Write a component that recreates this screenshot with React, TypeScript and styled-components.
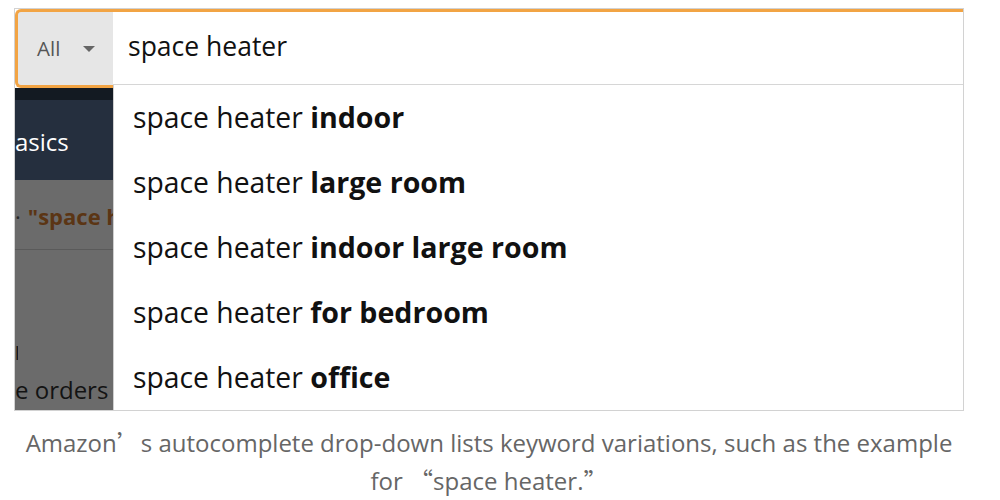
import styled, { createGlobalStyle } from "styled-components";

const GlobalStyle = createGlobalStyle`
  html, body {
    margin: 0;
    padding: 0;
    background: #ffffff;
  }
  body {
    width: 1000px;
    height: 500px;
    overflow: hidden;
  }
`;

const suggestions = [
  "indoor",
  "large room",
  "indoor large room",
  "for bedroom",
  "office",
];

const App = () => {
  return (
    <>
      <GlobalStyle />
      <Page>
        <Shot>
          <AllBox>
            All
            <Caret />
          </AllBox>
          <SearchInput>space heater</SearchInput>
          <Backdrop>
            <TopStrip />
            <NavBand>asics</NavBand>
            <ResultLine>
              <Dot>·</Dot>"space h
            </ResultLine>
            <DimmedRest>
              <Stub>l</Stub>
              <Orders>e orders</Orders>
            </DimmedRest>
          </Backdrop>
          <Dropdown>
            {suggestions.map((s) => (
              <Suggestion key={s}>
                space heater <b>{s}</b>
              </Suggestion>
            ))}
          </Dropdown>
        </Shot>
        <Caption>
          Amazon<Wide>’</Wide>s autocomplete drop-down lists keyword variations, such as the example
          <br />
          for <Wide>“</Wide>space heater.<Wide>”</Wide>
        </Caption>
      </Page>
    </>
  );
};

export default App;

const Page = styled.div`
  padding: 8px 0 0 14px;
`;

const Shot = styled.div`
  width: 948px;
  height: 401px;
  border: 1px solid #d2d2d2;
  background: #ffffff;
  display: grid;
  grid-template-columns: 98px 1fr;
  grid-template-rows: 76px 3px 1fr;
  overflow: hidden;
  font-family: "Open Sans", "Noto Sans", sans-serif;
`;

const AllBox = styled.div`
  grid-column: 1;
  grid-row: 1 / 3;
  box-sizing: border-box;
  background: #e6e6e6;
  border: 3px solid #f2a444;
  border-right: none;
  border-radius: 6px 0 0 6px;
  display: flex;
  align-items: center;
  padding: 0 0 2px 19px;
  gap: 23px;
  font-size: 20.5px;
  color: #555555;
`;

const Caret = styled.span`
  width: 0;
  height: 0;
  border-left: 6px solid transparent;
  border-right: 6px solid transparent;
  border-top: 6px solid #666666;
  margin-top: 2px;
`;

const SearchInput = styled.div`
  grid-column: 2;
  grid-row: 1;
  box-sizing: border-box;
  border-top: 3px solid #f2a444;
  border-bottom: 1px solid #d6d6d6;
  display: flex;
  align-items: center;
  padding: 0 0 4px 15px;
  font-size: 26.5px;
  color: #111111;
`;

const Backdrop = styled.div`
  grid-column: 1;
  grid-row: 3;
  display: flex;
  flex-direction: column;
  overflow: hidden;
  white-space: nowrap;
`;

const TopStrip = styled.div`
  height: 12px;
  background: #131a22;
`;

const NavBand = styled.div`
  height: 80px;
  background: #252f3e;
  color: #ffffff;
  font-size: 24px;
  display: flex;
  align-items: center;
  padding-top: 2px;
  box-sizing: border-box;
`;

const ResultLine = styled.div`
  height: 70px;
  background: #6b6b6b;
  border-bottom: 1px solid #5a5a5a;
  color: #5b3514;
  font-size: 22px;
  font-weight: 700;
  display: flex;
  align-items: center;
  box-sizing: border-box;
  padding-top: 2px;
`;

const Dot = styled.span`
  color: #2a2a2a;
  font-weight: 400;
  margin-right: 7px;
`;

const DimmedRest = styled.div`
  flex: 1;
  background: #6b6b6b;
  color: #131313;
  font-size: 24px;
  display: flex;
  flex-direction: column;
  justify-content: flex-end;
  padding-bottom: 4px;
`;

const Stub = styled.span`
  font-size: 18px;
  line-height: 18px;
  overflow: hidden;
  width: 3px;
  margin-bottom: 12px;
`;

const Orders = styled.span`
  line-height: 32px;
`;

const Dropdown = styled.div`
  grid-column: 2;
  grid-row: 2 / 4;
  border-left: 1px solid #cfcfcf;
  display: flex;
  flex-direction: column;
`;

const Suggestion = styled.div`
  height: 65px;
  line-height: 63px;
  padding-left: 19px;
  font-size: 28.3px;
  color: #111111;
  white-space: nowrap;

  b {
    font-weight: 700;
    font-size: 28.6px;
  }
`;

const Caption = styled.p`
  margin: 12px 0 0 -14px;
  width: 978px;
  text-align: center;
  font-family: "Open Sans", "Noto Sans", sans-serif;
  font-size: 24px;
  line-height: 37px;
  color: #666666;
`;

const Wide = styled.span`
  font-family: "Noto Sans CJK SC", sans-serif;
`;
